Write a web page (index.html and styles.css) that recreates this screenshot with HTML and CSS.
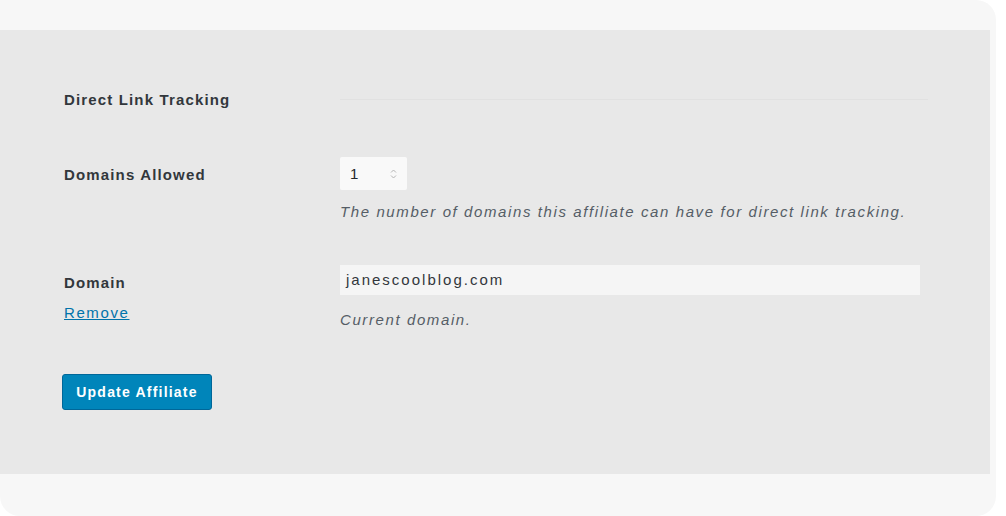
FILE: index.html
```html
<!DOCTYPE html>
<html>
<head>
<meta charset="utf-8">
<link rel="stylesheet" href="styles.css">
</head>
<body>
<div class="card">
  <div class="panel">
    <div class="row row-heading">
      <div class="label">Direct Link Tracking</div>
      <div class="field"><div class="rule"></div></div>
    </div>
    <div class="row row-allowed">
      <div class="label pad">Domains Allowed</div>
      <div class="field">
        <div class="num-input"><span>1</span><span class="spin"><svg width="7" height="12" viewBox="0 0 7 12"><path d="M1 4.5 L3.5 2 L6 4.5" fill="none" stroke="#b5b5b5" stroke-width="1"/><path d="M1 7.5 L3.5 10 L6 7.5" fill="none" stroke="#b5b5b5" stroke-width="1"/></svg></span></div>
        <p class="desc desc-allowed">The number of domains this affiliate can have for direct link tracking.</p>
      </div>
    </div>
    <div class="row row-domain">
      <div class="label pad">Domain<a class="remove" href="#">Remove</a></div>
      <div class="field">
        <div class="text-input">janescoolblog.com</div>
        <p class="desc desc-domain">Current domain.</p>
      </div>
    </div>
    <button class="btn">Update Affiliate</button>
  </div>
</div>
</body>
</html>
```
FILE: styles.css
```css
html, body { margin: 0; padding: 0; background: #ffffff; }
body { font-family: "Liberation Sans", Arial, sans-serif; color: #23282d; }
.card {
  width: 996px; height: 516px; box-sizing: border-box;
  background: #f7f7f7;
  border-radius: 0 20px 20px 20px;
  padding-top: 30px;
}
.panel {
  width: 990px; height: 444px; box-sizing: border-box;
  background: #e8e8e8;
  padding: 60px 0 0 64px;
}
.row { display: grid; grid-template-columns: 276px 588px; }
.label { font-size: 15px; font-weight: bold; line-height: 20px; letter-spacing: 1.15px; color: #32373c; display: flex; flex-direction: column; align-items: flex-start; }
.label.pad { padding-top: 8px; }
.row-heading { height: 20px; }
.rule { height: 1px; background: #e1e1e1; margin-top: 9px; }
.row-allowed { margin-top: 47px; }
.num-input {
  width: 67px; height: 33px; box-sizing: border-box;
  background: #f9f9f9; border-radius: 2px;
  display: flex; align-items: center; justify-content: space-between;
  padding: 0 10px 0 10px; font-size: 15px; color: #23282d;
}
.spin { display: flex; }
.desc { margin: 0; font-style: italic; font-size: 15px; line-height: 20px; color: #555d66; letter-spacing: 1.6px; }
.desc-allowed { margin-top: 12px; }
.row-domain { margin-top: 43px; }
.text-input {
  width: 580px; height: 30px; box-sizing: border-box;
  background: #f5f5f5; padding: 0 6px;
  font-size: 15px; line-height: 30px; color: #32373c; letter-spacing: 2px;
}
.desc-domain { margin-top: 15px; }
.remove { margin-top: 10px; color: #0073aa; font-weight: normal; text-decoration: underline; font-size: 15px; letter-spacing: 1.6px; }
.btn {
  display: block; margin-top: 44px; margin-left: -2px;
  width: 150px; height: 36px; border: 1px solid #006799; border-radius: 3px;
  background: #0085ba; color: #ffffff; font-family: "Liberation Sans", Arial, sans-serif;
  font-size: 14px; font-weight: bold; padding: 0; letter-spacing: 1.2px;
}
```
